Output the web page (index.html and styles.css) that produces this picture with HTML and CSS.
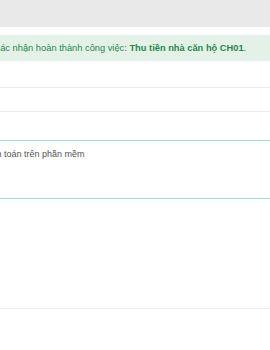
FILE: index.html
```html
<!DOCTYPE html>
<html lang="vi">
<head>
<meta charset="utf-8">
<link rel="stylesheet" href="styles.css">
</head>
<body>
<div class="topbar"></div>
<div class="page">
  <div class="alert">Xác nhận hoàn thành công việc: <b>Thu tiền nhà căn hộ CH01</b>.</div>
  <div class="field input"></div>
  <div class="field textarea">Thanh toán trên phần mềm</div>
  <div class="field footer"></div>
</div>
</body>
</html>
```
FILE: styles.css
```css
html, body {
  margin: 0;
  padding: 0;
  background: #ffffff;
  overflow: hidden;
}
body {
  width: 270px;
  height: 350px;
  font-family: "Liberation Sans", Arial, sans-serif;
}
.topbar {
  height: 27px;
  background: #e9e9e9;
}
.page {
  margin-left: -6px;
  padding-top: 8px;
}
.alert {
  height: 26px;
  box-sizing: border-box;
  padding: 7px 0 0 0;
  background: #e4f1e8;
  color: #28874a;
  font-size: 9.3px;
  line-height: 12px;
  white-space: nowrap;
}
.alert b {
  font-weight: bold;
}
.field {
  box-sizing: border-box;
}
.input {
  margin-top: 26px;
  height: 25px;
  border-top: 1px solid #ececec;
  border-bottom: 1px solid #ececec;
}
.textarea {
  margin-top: 28px;
  height: 59px;
  border-top: 1px solid #a2e2bc;
  border-bottom: 1px solid #a2e2bc;
  padding: 8px 0 0 0;
  color: #555555;
  font-size: 9px;
  line-height: 11px;
  text-indent: -18px;
  white-space: nowrap;
}
.footer {
  margin-top: 109px;
  border-top: 1px solid #efefef;
}
```
